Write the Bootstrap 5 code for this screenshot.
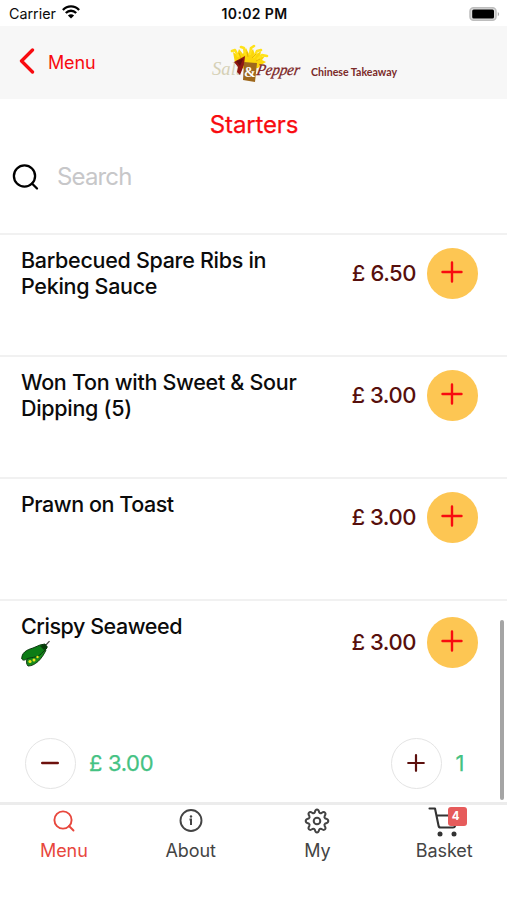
<!DOCTYPE html>
<html lang="en">
<head>
<meta charset="utf-8">
<meta name="viewport" content="width=device-width, initial-scale=1">
<title>Starters</title>
<link href="https://cdn.jsdelivr.net/npm/bootstrap@5.3.0/dist/css/bootstrap.min.css" rel="stylesheet">
<style>
body{font-family:Inter,"Liberation Sans",sans-serif;color:#0b0b0b;background:#fff;height:900px;overflow:hidden;line-height:1}
svg{display:block;flex:none}
.status{height:26px;font-size:14.3px;padding:2px 7px 0 9px}
.status>div{flex:1 1 0}
.wifi{margin:-3px 0 0 6px}
.clock{font-weight:600;font-size:14px;letter-spacing:.35px}
.topbar{height:73px;background:#f7f7f7;padding:0 0 0 19px}
.back{color:#f80b10;font-size:18px;text-decoration:none;letter-spacing:-.15px;padding-top:1px}
.chevron{margin:-5px 13px 0 0}
.brandmark{margin-left:113px}
.section-title{height:52px;color:#f80b10;font-size:24px;font-weight:400;letter-spacing:-.15px;padding-left:1px;-webkit-text-stroke:.25px #f80b10}
.search{height:52px;padding-left:12px}
.lens{margin-right:18px}
.search input{border:0;padding:0 0 2px;width:300px;font-size:24px;letter-spacing:-.85px;outline:0;background:transparent}
.search input::placeholder{color:#c7c7c9;opacity:1}
.menu-list{margin-top:30px}
.dish{height:122px;border-top:2px solid #f1f1f1;padding:13px 29.500px 0 21px}
.dish-name{font-size:21.5px;line-height:25.7px;font-weight:500;letter-spacing:-.3px;width:300px}
.tight{letter-spacing:-.45px}
.price{color:#570f0c;font-size:22px;font-weight:500;letter-spacing:-.45px;margin-right:11px}
.add{width:50.500px;height:50.500px;background:#fdc653;border-radius:50%;border:0;padding:0 0 2px}
.last{height:124px}
.last .order{padding-top:3px}
.qty{height:79px;padding:1px 43px 0 25px}
.step{width:51px;height:51px;border:1.5px solid #e4e4e4;border-radius:50%;background:#fff;padding:0 1px 1px 0}
.sum{color:#44c283;font-size:22px;font-weight:400;letter-spacing:-.35px;margin-left:13px;-webkit-text-stroke:.25px #44c283}
.scrollbar-thumb{position:absolute;right:3.500px;top:620px;width:4px;height:180px;border-radius:2px;background:#a5a5a5}
.tabs{border-top:3px solid #ececec;height:98px;color:#444}
.tabs a{color:#444;text-decoration:none;font-size:18px;width:25%;padding:3px 0 0 1px;letter-spacing:-.1px}
.tabs a.current{color:#e8473d}
.tabs .glyph{height:34px}
.cart{margin-top:-2px}
.count{position:absolute;left:19.500px;top:-1px;width:19px;height:19px;border-radius:3px;background:#e65b5b;color:#fff;font-size:11.5px;font-weight:700;padding-right:3px}
</style>
<script src="https://cdn.jsdelivr.net/npm/bootstrap@5.3.0/dist/js/bootstrap.bundle.min.js"></script>
</head>
<body class="position-relative">
<header>
  <div class="status d-flex align-items-center">
    <div class="d-flex align-items-center">Carrier
      <svg class="wifi" width="18" height="14" viewBox="0 0 18 14" fill="none" stroke="#000" stroke-width="2.3"><path d="M.9 5C5.4.2 12.6.2 17.1 5M3.8 8c3-3 7.400-3 10.400 0"/><path d="M9 13.500 5.900 10.400c1.800-1.700 4.400-1.700 6.200 0z" fill="#000" stroke="none"/></svg>
    </div>
    <span class="clock">10:02 PM</span>
    <div class="d-flex justify-content-end">
      <svg width="31" height="15" viewBox="0 0 31 15"><rect x="1" y=".8" width="26" height="12.500" rx="3.500" fill="#ddd" stroke="#bdbdbd" stroke-width="1.500"/><rect x="3.200" y="2.600" width="21.800" height="9" rx="1.500" fill="#000"/><path d="M28.800 5c1.800.8 1.800 3.400 0 4.200z" fill="#aaa"/></svg>
    </div>
  </div>
  <nav class="topbar d-flex align-items-center">
    <a href="#" class="back d-flex align-items-center">
      <svg class="chevron" width="16" height="26" viewBox="0 0 16 26" fill="none" stroke="#f80b10" stroke-width="3.300" stroke-linecap="round" stroke-linejoin="round"><path d="M13.500 2 2.500 13l11 11"/></svg>Menu</a>
    <svg class="brandmark" width="192" height="44" viewBox="0 0 192 44" aria-label="Salt and Pepper Chinese Takeaway">
      <path d="M27 22 25 11l4 3 2-6 4 5 3-6 3 6 4-5 2 6 6-4-1 6 5-1-3 4 4 2-5 3-3 3-14 1z" fill="#fbd60a"/>
      <g fill="none" stroke="#ffe21a" stroke-width="2.600" stroke-linecap="round" stroke-linejoin="round"><path d="m24 10 3-1 3 6M33 6l3 1 1 6M46 5l-3 2-1 6M53 9l-4 1-3 6M59 15l-5-1-4 4"/></g>
      <g fill="none" stroke="#e0a806" stroke-width=".8"><path d="m31 12 2 5M39 11l1 5M48 13l-4 4M52 18l-4 2"/></g>
      <text x="4" y="34" font-family="Liberation Serif,serif" font-style="italic" font-size="19" textLength="29" lengthAdjust="spacingAndGlyphs" fill="#d5d0b5">Salt</text>
      <path d="M26 21 37 15l-1 9-4 10-3-3 1-5z" fill="#8f1712"/><path d="m28 20 7-2-3 7z" fill="#65100f"/>
      <path d="m36 21 13 1-2 19-12-2z" fill="#9e681c"/>
      <text x="36" y="36" font-family="Liberation Serif,serif" font-weight="700" font-size="14" fill="#fff">&amp;</text>
      <text transform="translate(48 34) skewX(-10)" font-family="Liberation Serif,serif" font-style="italic" font-size="16" textLength="43" lengthAdjust="spacingAndGlyphs" fill="#7b2424" stroke="#7b2424" stroke-width=".3">Pepper</text>
      <text x="103" y="34.500" font-family="Lato,sans-serif" font-weight="700" font-size="11" textLength="86" lengthAdjust="spacingAndGlyphs" fill="#7b2b2a">Chinese Takeaway</text>
    </svg>
  </nav>
</header>
<main>
  <h1 class="section-title d-flex align-items-center justify-content-center m-0">Starters</h1>
  <div class="search d-flex align-items-center">
    <svg class="lens" width="27" height="27" viewBox="0 0 27 27" fill="none" stroke="#000" stroke-width="2.300" stroke-linecap="round"><circle cx="12.500" cy="12" r="10.600"/><path d="m20 19.500 5 5"/></svg>
    <input type="text" placeholder="Search" aria-label="Search">
  </div>
  <section class="menu-list">
    <article class="dish d-flex justify-content-between align-items-start">
      <div class="dish-name">Barbecued Spare Ribs in<br>Peking Sauce</div>
      <div class="order d-flex align-items-center"><span class="price text-nowrap">£ 6.50</span><button class="add d-flex align-items-center justify-content-center" aria-label="Add"><svg width="22" height="22" viewBox="0 0 22 22" stroke="#f80b10" stroke-width="2.400" stroke-linecap="round"><path d="M11 1.500v19M1.500 11h19"/></svg></button></div>
    </article>
    <article class="dish d-flex justify-content-between align-items-start">
      <div class="dish-name">Won Ton with Sweet &amp; Sour<br>Dipping (5)</div>
      <div class="order d-flex align-items-center"><span class="price text-nowrap">£ 3.00</span><button class="add d-flex align-items-center justify-content-center" aria-label="Add"><svg width="22" height="22" viewBox="0 0 22 22" stroke="#f80b10" stroke-width="2.400" stroke-linecap="round"><path d="M11 1.500v19M1.500 11h19"/></svg></button></div>
    </article>
    <article class="dish d-flex justify-content-between align-items-start">
      <div class="dish-name tight">Prawn on Toast</div>
      <div class="order d-flex align-items-center"><span class="price text-nowrap">£ 3.00</span><button class="add d-flex align-items-center justify-content-center" aria-label="Add"><svg width="22" height="22" viewBox="0 0 22 22" stroke="#f80b10" stroke-width="2.400" stroke-linecap="round"><path d="M11 1.500v19M1.500 11h19"/></svg></button></div>
    </article>
    <article class="dish last d-flex justify-content-between align-items-start">
      <div class="dish-name tight">Crispy Seaweed
        <svg width="30" height="28" viewBox="0 0 30 28"><path d="M24 6 28.500 1.200" stroke="#444" stroke-width="1.200"/><path d="M6 19c-1 3-.5 5 1 7 7 0 14-7 18-16l-3-4z" fill="#168a1b" stroke="#123c12"/><path d="M.8 19C.5 13 5 10 12 8l7-3 5-1 2 4-4 4c-4 5-8 5-13 6-3 0-6 4-8.200 1z" fill="#0c7c16" stroke="#0b3810"/><path d="m19 6 5-2 3 3-4 3z" fill="#073b0b"/><g fill="#e9e51b"><circle cx="9" cy="21.500" r="1.600"/><circle cx="13" cy="20" r="1.500"/><circle cx="16.500" cy="17" r="1.200"/></g></svg>
      </div>
      <div class="order d-flex align-items-center"><span class="price text-nowrap">£ 3.00</span><button class="add d-flex align-items-center justify-content-center" aria-label="Add"><svg width="22" height="22" viewBox="0 0 22 22" stroke="#f80b10" stroke-width="2.400" stroke-linecap="round"><path d="M11 1.500v19M1.500 11h19"/></svg></button></div>
    </article>
    <div class="qty d-flex align-items-center justify-content-between">
      <div class="d-flex align-items-center"><button class="step d-flex align-items-center justify-content-center" aria-label="Less"><svg width="18" height="18" viewBox="0 0 18 18" stroke="#6d100d" stroke-width="2.400" stroke-linecap="round"><path d="M1.200 9h15.600"/></svg></button><span class="sum">£ 3.00</span></div>
      <div class="d-flex align-items-center"><button class="step d-flex align-items-center justify-content-center" aria-label="More"><svg width="18" height="18" viewBox="0 0 18 18" stroke="#5c100d" stroke-width="2.200" stroke-linecap="round"><path d="M1.200 9h15.600M9 1.200v15.600"/></svg></button><span class="sum">1</span></div>
    </div>
  </section>
</main>
<div class="scrollbar-thumb"></div>
<footer class="tabs d-flex">
  <a href="#" class="current d-flex flex-column align-items-center"><span class="glyph"><svg width="22" height="26" viewBox="0 0 22 26" fill="none" stroke="currentColor" stroke-width="1.900" stroke-linecap="round"><circle cx="10" cy="12" r="8.600"/><path d="m16 18 4.500 4.500"/></svg></span>Menu</a>
  <a href="#" class="d-flex flex-column align-items-center"><span class="glyph"><svg width="24" height="26" viewBox="0 0 24 26" fill="none" stroke="currentColor" stroke-width="1.900"><circle cx="12" cy="12.500" r="10.500"/><path d="M10.500 11.500H12V17" stroke-width="2"/><circle cx="12" cy="8.500" r="1.200" fill="currentColor" stroke="none"/></svg></span>About</a>
  <a href="#" class="d-flex flex-column align-items-center"><span class="glyph"><svg width="26" height="26" viewBox="0 0 26 26" fill="none" stroke="currentColor" stroke-width="2" stroke-linejoin="round"><circle cx="13" cy="13" r="3.300"/><path d="M10.800 4.400Q11.300 1.600 13 1.600t2.200 2.800q.9 1.200 2.300.6 2.300-1.600 3.500-.4t-.4 3.500q-.6 1.400.6 2.300 3.100.5 3.100 2.600t-3.100 2.600q-1.200.9-.6 2.300 1.600 2.300.4 3.500t-3.500-.4q-1.400-.6-2.300.6-.5 2.800-2.200 2.800t-2.200-2.800q-.9-1.200-2.300-.6-2.300 1.600-3.500.4t.4-3.500q.6-1.400-.6-2.300-3.100-.5-3.100-2.600t3.100-2.600q1.200-.9.6-2.300-1.600-2.300-.4-3.500t3.500.4q1.400.6 2.300-.6z"/></svg></span>My</a>
  <a href="#" class="d-flex flex-column align-items-center"><span class="glyph position-relative"><svg class="cart" width="32" height="32" viewBox="0 0 32 32" fill="none" stroke="#333" stroke-width="2.100" stroke-linecap="round" stroke-linejoin="round"><path d="M1.500 2.500H7l3.500 17q.3 2 2 2H25q1.800 0 2.300-2l2.500-10H8.500"/><g fill="#333" stroke="none"><circle cx="12" cy="28" r="2.500"/><circle cx="26" cy="28" r="2.500"/></g></svg><span class="count d-flex align-items-center justify-content-center">4</span></span>Basket</a>
</footer>
</body>
</html>
